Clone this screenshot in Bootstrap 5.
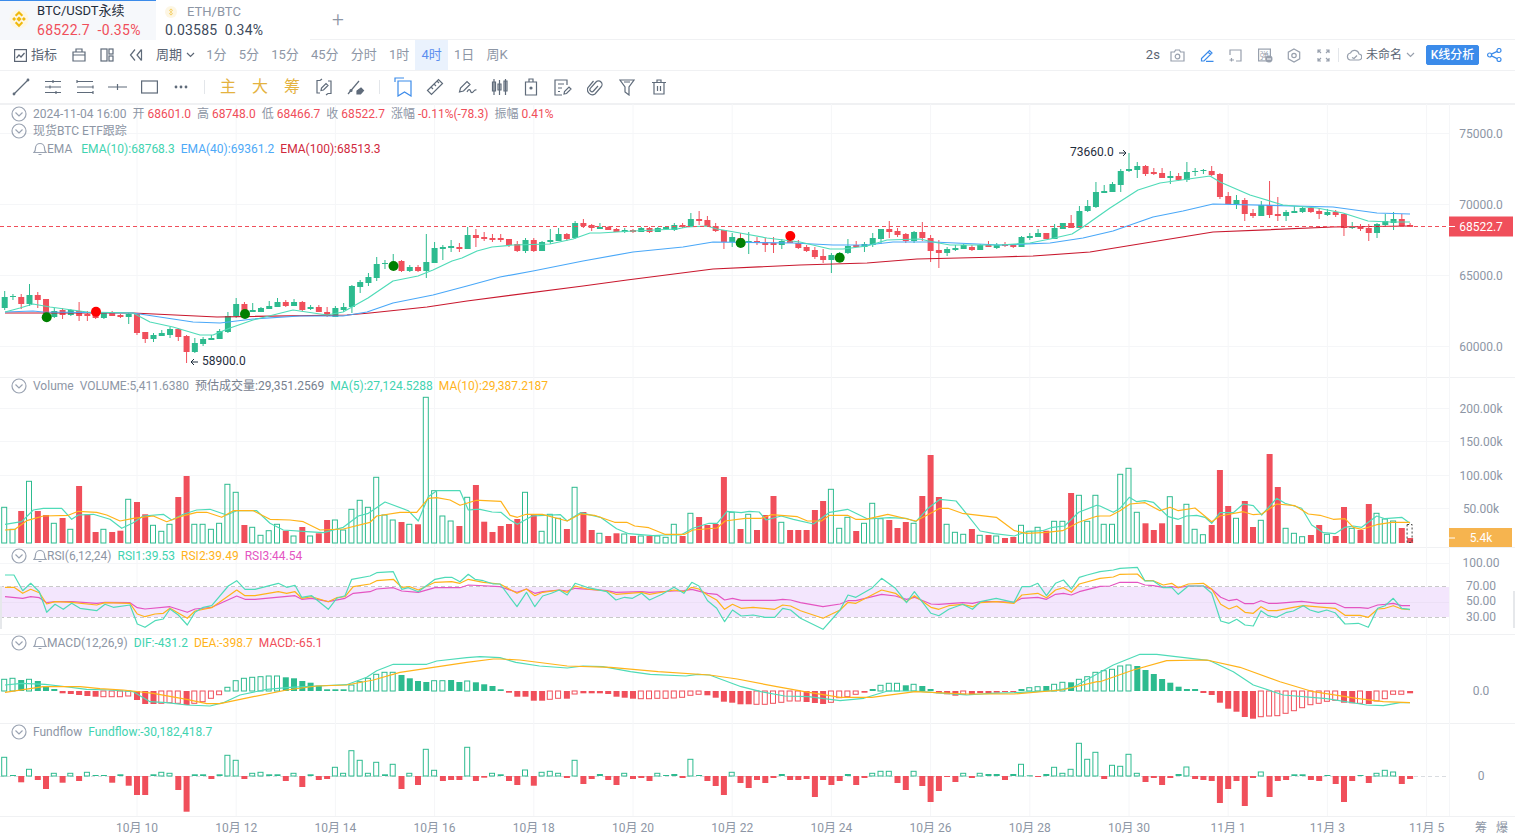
<!DOCTYPE html>
<html lang="zh">
<head>
  <meta charset="UTF-8">
  <meta name="viewport" content="width=device-width, initial-scale=1.0">
  <title>BTC/USDT永续</title>
  <link href="https://cdn.jsdelivr.net/npm/bootstrap@5.3.0/dist/css/bootstrap.min.css" rel="stylesheet">
  <style>
    html, body { height: 836px; overflow: hidden; background: #fff; }
    body { font-family: Roboto, "Noto Sans CJK SC", sans-serif; font-size: 12px; color: #8d96a5; }
    svg { display: block; }

    /* tabs */
    .tabs-bar { height: 40px; }
    .pair-tab { width: 154px; height: 40px; padding-top: 3px; }
    .pair-tab.on { background: #f6f8fb; width: 156px; box-shadow: inset 0 1px 0 #3b8bea; }
    .pair-tab .pair-name { font-size: 13px; line-height: 16px; color: #1f2d3d; height: 18px; }
    .pair-tab .pair-quote { font-size: 14px; line-height: 19px; letter-spacing: .3px; white-space: pre; }
    .pair-tab.off { padding-left: 9px; }
    .pair-dim { color: #8d96a5 !important; }
    .quote-red { color: #f04e5a; }
    .quote-dark { color: #3d4a5c; letter-spacing: .2px !important; }
    .eth-name { margin-left: 2px; }
    .tabs-rest { height: 40px; border-bottom: 1px solid #f0f1f3; }
    .add-tab { width: 56px; font-size: 21px; font-weight: 300; line-height: 38px; color: #8d96a5; text-align: center; }

    /* toolbars */
    .tool-row { height: 31px; border-bottom: 1px solid #f0f1f3; font-size: 13px; }
    .draw-row { height: 33px; border-bottom: 1px solid #f0f1f3; padding-left: 5px; }
    .tool-item { height: 30px; line-height: 30px; padding: 0 6.1px; white-space: nowrap; }
    .tool-item.on { background: #eaf2fd; color: #5b8def; }
    .tool-first { margin-left: 8px; margin-right: 1px; }
    .tool-period { padding-right: 5px; }
    .tool-secs { padding-right: 3px; }
    .tool-strong { color: #5b6574; }
    .tool-ico { width: 28.6px; height: 30px; color: #5f6b7a; }
    .tool-ico-r { width: 29.2px; height: 30px; color: #98a0ad; }
    .draw-ico { width: 32px; height: 32px; color: #5f6b7a; }
    .draw-txt { width: 32px; text-align: center; font-size: 16px; line-height: 32px; color: #e4b23f; }
    .draw-sep { width: 1px; height: 14px; background: #e3e6ea; margin: 0 7px; }
    .draw-sep.right-sep { margin-left: 0; }
    .file-name { font-size: 12px; }
    .grey-ico { color: #98a0ad; }
    .ln-ico { fill: none; stroke: currentColor; stroke-width: 1.2; }
    .blue-ico { color: #3b8bea; }
    .kline-btn { --bs-btn-padding-x: 0; --bs-btn-padding-y: 0; --bs-btn-font-size: 12px; --bs-btn-bg: #3b8bea; --bs-btn-border-color: #3b8bea; --bs-btn-border-radius: 2px; width: 53px; height: 20px; line-height: 18px; font-weight: 500; margin: 0 8px 0 11px; }
    .share-ico { margin-right: 13px; }

    /* chart panes */
    .pane-box { position: relative; }
    .pane-main { height: 273px; }
    .pane-vol { height: 170px; }
    .pane-rsi { height: 87px; }
    .pane-macd { height: 89px; }
    .pane-fund { height: 93px; }
    .pane-legend { position: absolute; left: 11px; top: 0; line-height: 18px; white-space: nowrap; }
    .pane-main .pane-legend { top: 1px; }
    .pane-legend .leg-row { height: 17.6px; }
    .leg-indent { padding-left: 22px; }
    .leg-chev { width: 16px; height: 16px; margin-right: 6px; color: #9aa3b2; flex: none; }
    .leg-bell { width: 14px; height: 14px; color: #9aa3b2; flex: none; }
    .leg-gap { margin-left: 6px; }
    .leg-gap-wide { margin-left: 9px; }
    .c-red { color: #f04e5a; }
    .c-teal { color: #3fd3b0; }
    .c-blue { color: #4da9f7; }
    .c-crim { color: #d0283c; }
    .c-amber { color: #ffb31a; }
    .c-pink { color: #e455c2; }
    .c-grey2 { color: #78818f; }
    .axis-txt { font-family: Roboto, "Noto Sans CJK SC", sans-serif; font-size: 12px; fill: #8d96a5; }
    .mark-txt { font-family: Roboto, sans-serif; font-size: 12px; fill: #1f2d3d; }
    .tag-txt { font-family: Roboto, sans-serif; font-size: 12px; fill: #fff; }
  </style>
</head>
<body>
  <!-- TABS -->
  <div class="d-flex tabs-bar">
    <div class="pair-tab on d-flex ps-2">
      <svg width="21" height="36" viewBox="-2 0 21 36" class="me-2"><circle cx="9" cy="16" r="9.500" fill="#fdf6e3"/><g fill="#f0b90b" transform="translate(9 16) scale(1.25) translate(-9 -16)"><path d="M9 13.900l2.100 2.100L9 18.100 6.900 16z"/><path d="M9 9.500l3.300 3.300-1.200 1.200L9 11.900 6.900 14l-1.200-1.200z"/><path d="M9 22.500l3.300-3.300-1.200-1.200L9 20.100 6.900 18l-1.200 1.200z"/><path d="M3.500 16l1.600-1.600L6.700 16l-1.600 1.600zM11.300 16l1.600-1.600 1.600 1.600-1.600 1.600z"/></g></svg>
      <div>
        <div class="pair-name">BTC/USDT永续</div>
        <div class="pair-quote quote-red">68522.7  -0.35%</div>
      </div>
    </div>
    <div class="pair-tab off d-flex flex-column">
      <div class="pair-name pair-dim d-flex align-items-center">
        <svg width="12" height="12" viewBox="0 0 12 12" class="me-2"><circle cx="6" cy="6" r="6" fill="#fdf6e3"/><g fill="#f3cb5c"><path d="M6 4.800L7.200 6 6 7.200 4.800 6z"/><path d="M6 2.400l2 2-.7.700L6 3.800 4.700 5.100 4 4.400zM6 9.600l2-2-.7-.700L6 8.200 4.700 6.900 4 7.600z"/></g></svg>
        <span class="eth-name">ETH/BTC</span>
      </div>
      <div class="pair-quote quote-dark">0.03585  0.34%</div>
    </div>
    <div class="tabs-rest flex-grow-1 d-flex"><div class="add-tab">+</div></div>
  </div>

  <!-- PERIOD TOOLBAR -->
  <div class="tool-row d-flex align-items-center">
    <div class="tool-item tool-strong tool-first d-flex align-items-center">
      <svg width="13" height="13" viewBox="0 0 13 13" class="ln-ico me-1"><rect x=".6" y=".6" width="11.800" height="11.800"/><path d="M2.500 9l2.500-3 2 2 3.500-4"/></svg>指标
    </div>
    <div class="tool-ico d-flex align-items-center justify-content-center"><svg width="14" height="14" viewBox="0 0 14 14" class="ln-ico"><path d="M1 4h12v9H1zM4 4V1h6v3M1 7h12"/></svg></div>
    <div class="tool-ico d-flex align-items-center justify-content-center"><svg width="14" height="14" viewBox="0 0 14 14" class="ln-ico"><rect x="1" y="1" width="6" height="12"/><rect x="9" y="1" width="4" height="5"/><rect x="9" y="8" width="4" height="5"/></svg></div>
    <div class="tool-ico d-flex align-items-center justify-content-center"><svg width="14" height="14" viewBox="0 0 14 14" class="ln-ico"><path d="M6 1.500L1.500 7 6 12.500M12.500 1.500L8 7l4.500 5.500M12.500 1.500v11"/></svg></div>
    <div class="tool-item tool-strong tool-period d-flex align-items-center">周期<svg width="9" height="6" viewBox="0 0 9 6" class="ln-ico ms-1"><path d="M1 1l3.500 3.500L8 1"/></svg></div>
    <div class="tool-item">1分</div>
    <div class="tool-item">5分</div>
    <div class="tool-item">15分</div>
    <div class="tool-item">45分</div>
    <div class="tool-item">分时</div>
    <div class="tool-item">1时</div>
    <div class="tool-item on">4时</div>
    <div class="tool-item">1日</div>
    <div class="tool-item">周K</div>

    <div class="ms-auto d-flex align-items-center">
      <div class="tool-item tool-strong tool-secs">2s</div>
      <div class="tool-ico-r d-flex align-items-center justify-content-center"><svg width="15" height="13" viewBox="0 0 15 13" class="ln-ico"><path d="M1 3h3.500l1-2h4l1 2H14v9H1z"/><circle cx="7.500" cy="7.500" r="2.300"/></svg></div>
      <div class="tool-ico-r blue-ico d-flex align-items-center justify-content-center"><svg width="14" height="14" viewBox="0 0 14 14" class="ln-ico"><path d="M1.500 10.500L9.500 2.500l2.500 2.500-8 8H1.500zM8 4l2.500 2.500M6 13.300h7.500"/></svg></div>
      <div class="tool-ico-r d-flex align-items-center justify-content-center"><svg width="13" height="13" viewBox="0 0 13 13" class="ln-ico"><path d="M1 6V1h11v11H7M2.500 9v3.500M.5 11H5"/></svg></div>
      <div class="tool-ico-r d-flex align-items-center justify-content-center"><svg width="15" height="15" viewBox="0 0 15 15"><rect x=".6" y="1.100" width="11.800" height="11.800" fill="none" stroke="currentColor" stroke-width="1.200"/><text x="1.800" y="10.500" font-size="9" fill="currentColor" font-family="Noto Sans CJK SC">弹</text><circle cx="11" cy="11" r="3.500" fill="currentColor"/><path d="M9 11h4" stroke="#fff"/></svg></div>
      <div class="tool-ico-r d-flex align-items-center justify-content-center"><svg width="14" height="15" viewBox="0 0 14 15" class="ln-ico"><path d="M7 1l5.700 3.200v6.600L7 14 1.300 10.800V4.200z"/><circle cx="7" cy="7.500" r="2.200"/></svg></div>
      <div class="tool-ico-r d-flex align-items-center justify-content-center"><svg width="13" height="13" viewBox="0 0 13 13" class="ln-ico"><path d="M1 4V1h3M9 1h3v3M12 9v3H9M4 12H1V9M1 1l3 3M12 1L9 4M12 12L9 9M1 12l3-3"/></svg></div>
      <div class="draw-sep right-sep"></div>
      <svg width="16" height="12" viewBox="0 0 16 12" class="ln-ico grey-ico"><path d="M4 11h8.500a3 3 0 0 0 .5-6A4.500 4.500 0 0 0 4.500 4 3.600 3.600 0 0 0 4 11zM6 8.500l2 1 3-3"/></svg>
      <span class="tool-strong file-name ms-1">未命名</span>
      <svg width="9" height="6" viewBox="0 0 9 6" class="ln-ico grey-ico ms-1"><path d="M1 1l3.500 3.500L8 1"/></svg>
      <button type="button" class="btn btn-primary btn-sm kline-btn">K线分析</button>
      <svg width="15" height="14" viewBox="0 0 15 14" class="ln-ico blue-ico share-ico"><circle cx="2.600" cy="7" r="2"/><circle cx="12" cy="2.500" r="2"/><circle cx="12" cy="11.500" r="2"/><path d="M4.400 6.100l5.800-2.700M4.400 7.900l5.800 2.700"/></svg>
    </div>
  </div>

  <!-- DRAWING TOOLBAR -->
  <div class="draw-row d-flex align-items-center">
    <div class="draw-ico d-flex align-items-center justify-content-center"><svg width="18" height="18" viewBox="0 0 18 18" class="ln-ico"><path d="M2 16L16 2"/><circle cx="2" cy="16" r=".8"/><circle cx="16" cy="2" r=".8"/></svg></div>
    <div class="draw-ico d-flex align-items-center justify-content-center"><svg width="18" height="16" viewBox="0 0 18 16" class="ln-ico"><path d="M1 2.500h16M1 8h16M1 13.500h16M9 1v3M6 6.500v3M12 12v3"/></svg></div>
    <div class="draw-ico d-flex align-items-center justify-content-center"><svg width="18" height="16" viewBox="0 0 18 16" class="ln-ico"><path d="M1 2.500h16M1 8h16M1 13.500h16M1 1v3M17 6.500v3M17 12v3"/></svg></div>
    <div class="draw-ico d-flex align-items-center justify-content-center"><svg width="19" height="10" viewBox="0 0 19 10" class="ln-ico"><path d="M0 5h19M9.500 2v6"/></svg></div>
    <div class="draw-ico d-flex align-items-center justify-content-center"><svg width="17" height="14" viewBox="0 0 17 14" class="ln-ico"><rect x=".6" y="1" width="15.800" height="12"/></svg></div>
    <div class="draw-ico d-flex align-items-center justify-content-center"><svg width="14" height="4" viewBox="0 0 14 4" fill="currentColor"><circle cx="2" cy="2" r="1.400"/><circle cx="7" cy="2" r="1.400"/><circle cx="12" cy="2" r="1.400"/></svg></div>
    <div class="draw-sep"></div>
    <div class="draw-txt">主</div>
    <div class="draw-txt">大</div>
    <div class="draw-txt">筹</div>
    <div class="draw-ico d-flex align-items-center justify-content-center"><svg width="18" height="18" viewBox="0 0 18 18" class="ln-ico"><path d="M5 2.500H2v12.500h3M13 3h3v12.500h-3M5 2.500l2-1.500M13 15.500l-2 1.500"/><path d="M6 12.500l.5-2.500 4.500-4.500 2 2-4.500 4.500z"/></svg></div>
    <div class="draw-ico d-flex align-items-center justify-content-center"><svg width="18" height="18" viewBox="0 0 18 18" class="ln-ico"><path d="M1 16L12 3"/><circle cx="4" cy="12.500" r="1"/><path d="M10 13l4-3 2.500 2.500-3 3.500H10z" fill="currentColor"/></svg></div>
    <div class="draw-sep"></div>
    <div class="draw-ico blue-ico d-flex align-items-center justify-content-center"><svg width="18" height="20" viewBox="0 0 18 20" class="ln-ico"><path d="M1 5V1h9M4 4h13v15l-6.500-4L4 19z"/></svg></div>
    <div class="draw-ico d-flex align-items-center justify-content-center"><svg width="18" height="18" viewBox="0 0 18 18" class="ln-ico"><path d="M1.500 12.500L12.500 1.500l4 4-11 11zM5 9l2 2M8 6l2 2M11 3l2 2"/></svg></div>
    <div class="draw-ico d-flex align-items-center justify-content-center"><svg width="19" height="18" viewBox="0 0 19 18" class="ln-ico"><path d="M1.500 14l1-4L9 3.500l3 3-6.500 6.500zM9 14c1.500-3 3-3 3.500-1s2 2 3 .5 1.500-2 3-1.500"/></svg></div>
    <div class="draw-ico d-flex align-items-center justify-content-center"><svg width="19" height="18" viewBox="0 0 19 18" class="ln-ico"><path d="M2.500 4h3v9h-3zM4 1v16M8 6h3v6H8zM9.500 2v15M14 3h3v10h-3zM15.500 1v16"/></svg></div>
    <div class="draw-ico d-flex align-items-center justify-content-center"><svg width="14" height="18" viewBox="0 0 14 18" class="ln-ico"><path d="M1.500 4h11v13h-11zM5 4V1h4v3"/><circle cx="7" cy="10" r="1" fill="currentColor"/></svg></div>
    <div class="draw-ico d-flex align-items-center justify-content-center"><svg width="18" height="17" viewBox="0 0 18 17" class="ln-ico"><path d="M13 6V1H1v15h7M4 5h6M4 9h4M4 12.500h2M10 15l.5-2.500L15 8l2 2-4.500 4.500z"/></svg></div>
    <div class="draw-ico d-flex align-items-center justify-content-center"><svg width="16" height="18" viewBox="0 0 16 18" class="ln-ico"><path d="M11 8l-4.500 5a2 2 0 0 1-3-2.800L9 4a3.500 3.500 0 0 1 5 5l-6 7a5 5 0 0 1-7-6.500L6.500 3"/></svg></div>
    <div class="draw-ico d-flex align-items-center justify-content-center"><svg width="16" height="17" viewBox="0 0 16 17" class="ln-ico"><path d="M1 1h14l-5 7v8L6 13V8zM5 3h6"/></svg></div>
    <div class="draw-ico d-flex align-items-center justify-content-center"><svg width="14" height="16" viewBox="0 0 14 16" class="ln-ico"><path d="M0 3.500h14M5 3.500V1h4v2.500M2 3.500V15h10V3.500M5.500 7v5M8.500 7v5"/></svg></div>
  </div>

  <!-- CHART -->
  <div class="pane-box pane-main">
    <svg id="paneMain" width="1515" height="273"></svg>
    <div class="pane-legend">
      <div class="leg-row d-flex align-items-center">
        <svg class="leg-chev ln-ico" viewBox="0 0 16 16"><circle cx="8" cy="8" r="7"/><path d="M4.500 6.500L8 10l3.500-3.500"/></svg>
        <span>2024-11-04 16:00</span>
        <span class="leg-gap">开 <span class="c-red">68601.0</span></span>
        <span class="leg-gap">高 <span class="c-red">68748.0</span></span>
        <span class="leg-gap">低 <span class="c-red">68466.7</span></span>
        <span class="leg-gap">收 <span class="c-red">68522.7</span></span>
        <span class="leg-gap">涨幅 <span class="c-red">-0.11%(-78.3)</span></span>
        <span class="leg-gap">振幅 <span class="c-red">0.41%</span></span>
      </div>
      <div class="leg-row d-flex align-items-center">
        <svg class="leg-chev ln-ico" viewBox="0 0 16 16"><circle cx="8" cy="8" r="7"/><path d="M4.500 6.500L8 10l3.500-3.500"/></svg>
        <span>现货BTC ETF跟踪</span>
      </div>
      <div class="leg-row leg-indent d-flex align-items-center">
        <svg class="leg-bell ln-ico" viewBox="0 0 14 14"><path d="M1 10.500h12c-1.200-1-1.500-2-1.500-4.500A4.500 4.500 0 0 0 2.500 6c0 2.500-.3 3.500-1.500 4.500zM5.500 12.500h3"/></svg>
        <span>EMA</span>
        <span class="c-teal leg-gap-wide">EMA(10):68768.3</span>
        <span class="c-blue leg-gap">EMA(40):69361.2</span>
        <span class="c-crim leg-gap">EMA(100):68513.3</span>
      </div>
    </div>
  </div>
  <div class="pane-box pane-vol">
    <svg id="paneVol" width="1515" height="170"></svg>
    <div class="pane-legend">
      <div class="leg-row d-flex align-items-center">
        <svg class="leg-chev ln-ico" viewBox="0 0 16 16"><circle cx="8" cy="8" r="7"/><path d="M4.500 6.500L8 10l3.500-3.500"/></svg>
        <span>Volume</span>
        <span class="leg-gap">VOLUME:5,411.6380</span>
        <span class="leg-gap c-grey2">预估成交量:29,351.2569</span>
        <span class="leg-gap c-teal">MA(5):27,124.5288</span>
        <span class="leg-gap c-amber">MA(10):29,387.2187</span>
      </div>
    </div>
  </div>
  <div class="pane-box pane-rsi">
    <svg id="paneRsi" width="1515" height="87"></svg>
    <div class="pane-legend">
      <div class="leg-row d-flex align-items-center">
        <svg class="leg-chev ln-ico" viewBox="0 0 16 16"><circle cx="8" cy="8" r="7"/><path d="M4.500 6.500L8 10l3.500-3.500"/></svg>
        <svg class="leg-bell ln-ico" viewBox="0 0 14 14"><path d="M1 10.500h12c-1.200-1-1.500-2-1.500-4.500A4.500 4.500 0 0 0 2.500 6c0 2.500-.3 3.500-1.500 4.500zM5.500 12.500h3"/></svg>
        <span>RSI(6,12,24)</span>
        <span class="leg-gap c-teal">RSI1:39.53</span>
        <span class="leg-gap c-amber">RSI2:39.49</span>
        <span class="leg-gap c-pink">RSI3:44.54</span>
      </div>
    </div>
  </div>
  <div class="pane-box pane-macd">
    <svg id="paneMacd" width="1515" height="89"></svg>
    <div class="pane-legend">
      <div class="leg-row d-flex align-items-center">
        <svg class="leg-chev ln-ico" viewBox="0 0 16 16"><circle cx="8" cy="8" r="7"/><path d="M4.500 6.500L8 10l3.500-3.500"/></svg>
        <svg class="leg-bell ln-ico" viewBox="0 0 14 14"><path d="M1 10.500h12c-1.200-1-1.500-2-1.500-4.500A4.500 4.500 0 0 0 2.500 6c0 2.500-.3 3.500-1.500 4.500zM5.500 12.500h3"/></svg>
        <span>MACD(12,26,9)</span>
        <span class="leg-gap c-teal">DIF:-431.2</span>
        <span class="leg-gap c-amber">DEA:-398.7</span>
        <span class="leg-gap c-red">MACD:-65.1</span>
      </div>
    </div>
  </div>
  <div class="pane-box pane-fund">
    <svg id="paneFund" width="1515" height="93"></svg>
    <div class="pane-legend">
      <div class="leg-row d-flex align-items-center">
        <svg class="leg-chev ln-ico" viewBox="0 0 16 16"><circle cx="8" cy="8" r="7"/><path d="M4.500 6.500L8 10l3.500-3.500"/></svg>
        <span>Fundflow</span>
        <span class="leg-gap c-teal">Fundflow:-30,182,418.7</span>
      </div>
    </div>
  </div>
  <svg id="paneTime" width="1515" height="20"></svg>

  <script src="https://cdn.jsdelivr.net/npm/bootstrap@5.3.0/dist/js/bootstrap.bundle.min.js"></script>
  <script>
    const UP = '#2dbb8f', DOWN = '#f04f5b', TEAL = '#4fdbb8', BLUE = '#4aa8f8', CRIMSON = '#c9182e', AMBER = '#ffb31a', PINK = '#e455c2';
    const GRID = '#f5f6f8', SEP = '#f0f1f3', AXIS_X = 1449;
    const barX = i => 4.7 + i * 8.267;
    const ticks = Array.from({ length: 14 }, (_, k) => 137 + k * 99.2);

    // y values below were read off at 3x, so they all come through /3 + top of the crop
    const fromCrop = (list, top) => list.map(v => Math.sign(v) * (top + Math.abs(v) / 3));

    // candles: open/close/high/low as page y
    const CANDLES = `g297,308,291,310 g296,297,294,300 r297,304,294,309 g295,304,284,306 r295,300,292,308 r299,314,299,316 g311,317,308,318 r310,315,308,319 g310,315,309,316 r311,316,302,321
r314,316,311,321 r313,318,311,319 g313,318,312,319 r313,316,311,316 r315,317,314,318 g314,317,313,324 r314,333,314,335 r332,339,332,343 g335,339,333,342 g333,336,330,336
g329,335,327,338 r329,337,328,341 r336,352,335,363 g343,352,338,353 g339,344,337,346 g338,340,335,340 g331,339,329,339 g316,332,312,333 g304,316,298,318 r304,317,302,318
g310,312,303,312 g308,312,307,312 g306,309,301,309 g302,307,298,307 r302,306,300,307 g302,306,299,306 r302,310,301,311 g307,309,305,310 r307,312,305,312 r312,316,307,317
g308,317,306,317 g307,310,303,312 g286,307,285,313 g282,287,280,293 g277,283,273,286 g264,278,257,281 g263,264,260,269 g263,268,254,270 r261,271,260,272 g267,271,265,272
r267,271,265,272 g262,271,234,278 g248,263,242,263 g247,249,245,260 g246,248,240,252 r247,249,243,252 g235,249,227,249 r235,238,229,247 r237,239,232,241 r238,240,234,242
r238,240,234,242 r239,245,239,247 r244,251,241,252 g240,251,238,253 r240,251,238,252 g242,251,241,251 g240,242,229,244 g234,241,228,241 r234,239,233,241 g223,238,221,239
r223,226,219,228 r225,228,224,231 g227,229,223,229 r227,230,226,230 r229,232,228,232 g230,232,228,233 r230,232,229,233 g228,232,227,232 r228,232,227,233 g228,232,227,232
g227,229,226,229 g225,230,223,231 r225,227,223,228 g219,227,213,227 r219,221,211,225 r220,226,216,227 r226,231,223,232 r230,242,230,249 g237,242,233,247 r238,246,233,247
g241,243,232,254 r241,243,237,245 r242,245,238,252 r243,245,237,253 g241,245,239,249 r241,243,236,243 r243,248,240,249 r247,251,245,252 r250,257,247,259 r256,260,249,263
g255,260,253,273 g253,258,252,259 g246,253,239,254 r245,247,241,247 g244,247,242,252 g238,245,233,247 g229,239,229,244 r229,232,221,238 r231,235,228,237 r234,241,233,243
g232,241,231,243 r232,238,222,241 r238,251,235,262 r250,253,240,268 g249,253,247,256 g248,250,245,251 g245,249,244,249 r247,250,245,251 g245,250,244,250 r245,247,241,247
g245,248,243,249 r244,246,242,247 r245,247,245,248 g237,247,236,247 g236,238,233,240 g233,237,229,237 r233,239,233,239 g228,239,224,239 g223,229,223,229 r223,228,215,228
g211,228,206,228 g206,211,200,212 g192,207,182,208 g191,193,185,193 g184,192,182,192 g171,185,169,192 g169,171,153,172 g166,170,162,178 r166,174,165,176 r172,174,168,175
r173,178,168,178 g176,178,171,184 r176,180,173,181 g172,180,162,182 g171,172,168,176 g170,171,169,174 r171,175,166,176 r174,197,173,199 r196,204,192,204 g200,204,195,209
r200,214,198,221 r213,216,209,218 g205,216,201,216 r205,215,181,218 r214,216,197,221 g212,216,210,221 g211,213,206,213 g208,212,207,213 r208,212,207,213 r211,214,208,219
g212,215,209,216 r212,215,210,217 r214,228,214,236 g227,228,222,229 r226,229,224,231 r228,233,224,241 g224,233,223,238 g221,225,214,226 g219,223,212,230 r219,226,214,227
r225,227,223,227`.split(/\s+/);

    const EMA10 = [5,312,20,308,33,304,50,307,87,312,133,313,150,322,173,327,200,335,213,335,230,328,253,320,293,310,327,315,343,312,368,298,393,281,418,276,433,270,452,261,462,258,477,251,492,247,513,245,550,244,573,239,590,233,600,233,633,231,677,229,687,227,707,226,717,229,740,233,767,238,800,242,830,249,843,249,867,246,887,240,920,239,933,242,950,245,1000,245,1030,243,1050,239,1072,234,1083,227,1110,208,1138,190,1160,183,1210,176,1220,182,1250,195,1283,205,1317,208,1343,213,1368,221,1390,222,1410,222];
    const EMA40 = [5,312,33,311,43,312,133,313,193,322,220,323,253,319,300,316,343,316,367,312,393,303,433,295,467,286,500,277,533,271,583,261,633,252,683,247,713,242,793,243,833,245,867,245,893,242,933,242,1000,245,1050,243,1083,238,1113,231,1153,217,1183,211,1213,204,1333,207,1377,213,1410,214];
    const EMA100 = [5,313,133,313,217,317,347,315,370,313,427,307,467,301,583,286,627,280,713,269,800,265,867,263,917,259,1000,257,1033,256,1090,252,1133,245,1213,232,1333,227,1410,226];

    // positive = up bar, negative = down bar
    const VOL = [...fromCrop([682,748,-693,604,-693,-705,730,-714,748,-618,-703,-756,748,-756,-752,658,-666,-703,736,754,733,-651,-588,733,733,748,730,613,637,-735,742,766,752,733,-752,768,-741,768,-760,-720,720,750,688,661,682,592,705,720,-726,733,-733,352,632,708,723,-738,652,-615], 280),
      ...fromCrop([-245,-276,-258,-252,-237,157,-225,274,223,235,-267,142,-216,-270,280,-288,-280,282,-288,288,-288,288,292,253,-288,220,-231,-255,-252,-111,217,-267,223,-270,-225,-168,247,-270,-270,-270,-210,-183,148,265,232,-273,250,190,236,-240,-264,-246,250,-168,-45,-171,253,277,283,-267,286,-285,288,-294,-291,256,274,262,-272,244,244,-159,166,244,166], 440),
      ...fromCrop([253,253,103,85,217,-250,-270,-250,170,-255,193,268,284,-255,-90,-198,235,-183,-261,241,-42,-141,265,280,290,-285,-255,283,-288,-201,265,-270,-192,220,237,243,-264,-294], 440)];

    // traced lines, [x, y, x, y, ...] in page px; overlapping crops get cut at the join
    const trace = (...segs) => {
      const out = [];
      segs.forEach(([pts, ox, oy, sx]) => {
        for (let k = 0; k < pts.length; k += 2) {
          const x = ox + pts[k] / sx, y = oy + pts[k + 1] / 3;
          if (!out.length || x > out[out.length - 2]) out.push(x, y);
        }
      });
      return out;
    };
    const Z10 = 1568 / 630, Z11 = 1568 / 620;

    const VOL_MA5 = trace(
      [[15,733,65,725,100,690,130,685,185,685,215,718,235,705,280,703,330,718,365,745,400,728,430,708,490,703,515,720,550,703,590,690,630,688,680,705,710,692,770,692,810,730,850,750,920,755,970,758,1030,742,1075,708,1105,700,1155,666,1225,692,1255,723,1285,650,1310,632,1380,632,1405,690,1430,688], 0, 280, 3],
      [[0,208,30,216,52,217,75,240,93,253,130,228,160,226,200,224,217,243,250,218,300,232,340,266,370,281,430,287,460,285,500,285,530,265,570,250,590,250,615,214,650,218,670,214,695,216,712,240,750,228,780,238,830,252,870,217,915,208,965,237,1020,233,1060,235,1085,245,1115,205,1145,178,1185,183,1210,220,1245,273,1280,281,1330,288,1360,275,1400,272,1425,262,1455,258,1490,217,1535,196], 480, 440, Z10],
      [[0,198,40,217,60,205,88,172,110,185,135,182,160,187,205,230,235,238,260,228,290,226,315,232,335,250,360,218,400,218,430,192,460,197,485,225,530,175,555,190,605,205,635,255,670,278,705,281,735,262,760,258,785,262,830,228,855,236,905,232,930,250], 1100, 440, 3]);
    const VOL_MA10 = trace(
      [[15,750,45,748,80,722,130,708,205,706,235,694,290,697,320,705,360,723,400,715,460,708,500,725,540,710,590,697,620,697,665,712,700,692,760,692,810,718,870,720,910,725,960,750,1030,747,1110,727,1130,708,1200,697,1250,697,1285,655,1310,653,1350,660,1380,676,1430,661], 0, 280, 3],
      [[0,181,52,184,75,226,93,232,115,223,155,223,217,243,250,222,285,226,335,247,365,247,385,258,420,263,460,283,510,283,530,270,590,264,610,243,660,235,700,235,725,224,790,230,815,243,850,243,870,226,915,226,935,238,960,238,1015,223,1085,243,1145,205,1165,205,1200,220,1285,232,1330,272,1360,280,1410,277,1450,272,1490,247,1535,229], 480, 440, Z10],
      [[0,228,30,228,60,212,90,192,135,188,180,212,210,202,235,212,285,204,335,245,360,228,430,215,460,224,485,222,530,192,585,197,625,222,660,226,700,238,735,236,760,262,785,268,830,254,875,247,930,247], 1100, 440, 3]);

    const RSI1 = trace(
      [[15,75,42,75,68,122,92,100,118,125,140,187,165,163,190,178,215,160,240,175,290,182,315,163,340,172,390,165,412,222,435,232,465,212,490,207,510,177,535,195,562,225,585,187,610,172,635,167,685,108,710,92,735,118,765,118,835,100,860,112,885,106,905,142,935,137,985,178,1010,145,1035,137,1055,88,1110,78,1130,68,1180,65,1205,118,1225,113,1255,125,1305,88,1335,82,1355,82,1380,95,1405,73,1425,88,1450,92,1480,102], 0, 550, 3],
      [[0,72,43,140,67,97,88,140,108,108,130,100,150,90,170,105,190,70,220,82,270,95,293,120,315,112,335,115,358,100,378,120,410,103,440,82,465,100,485,67,503,78,525,122,548,145,568,185,588,150,610,168,640,165,670,172,695,172,715,145,735,150,760,175,817,208,860,150,880,105,900,112,940,85,965,55,1000,85,1028,128,1048,95,1090,160,1110,167,1135,148,1170,133,1195,148,1215,125,1255,115,1300,127,1320,80,1340,80,1360,70,1382,107,1405,70,1425,60,1445,87,1465,52,1485,45], 500, 560, Z11],
      [[0,395,40,390,60,385,112,382,135,423,160,423,190,443,215,442,235,463,265,438,310,438,335,460,362,543,387,550,410,538,435,555,460,558,483,512,505,527,530,532,560,517,580,513,610,497,630,510,655,517,680,510,705,518,735,552,775,550,805,562,833,505,855,497,880,475,905,505,930,508], 1100, 440, 3]);
    const RSI2 = trace(
      [[15,112,42,112,68,130,92,118,118,128,140,162,165,155,215,157,290,165,315,158,390,160,412,192,435,200,465,192,490,190,510,175,562,205,585,183,635,173,710,120,735,137,765,137,835,125,860,130,885,125,905,145,935,140,985,155,1010,143,1035,140,1060,110,1110,102,1130,92,1180,88,1205,112,1230,110,1255,120,1305,97,1355,95,1380,100,1405,88,1450,97], 0, 550, 3],
      [[0,72,43,100,67,87,88,107,108,97,150,90,170,97,190,78,220,87,270,93,293,103,358,97,378,103,440,90,465,95,485,82,503,87,525,105,548,120,568,148,588,133,610,145,640,142,695,148,715,135,735,138,760,152,817,175,860,150,880,127,900,130,965,90,1000,100,1028,125,1048,107,1090,142,1110,148,1135,137,1170,133,1195,140,1215,128,1255,125,1300,130,1320,105,1360,100,1382,113,1405,90,1425,83,1445,97,1465,72], 500, 560, Z11],
      [[0,415,40,411,60,403,112,402,135,422,160,422,190,435,215,430,235,443,265,432,310,430,335,447,362,493,387,507,410,498,435,517,460,520,483,500,505,512,530,512,580,502,610,497,680,503,705,505,735,526,780,526,805,532,833,507,855,505,880,497,905,507,930,509], 1100, 440, 3]);
    const RSI3 = trace(
      [[15,140,68,145,92,140,118,143,140,158,165,155,215,155,290,160,315,157,390,158,412,173,435,177,510,170,562,187,585,177,635,172,710,138,735,148,765,148,885,137,905,148,935,145,985,155,1035,145,1060,130,1110,125,1130,117,1180,113,1205,123,1255,127,1305,113,1380,113,1405,105], 0, 550, 3],
      [[0,80,43,97,67,87,88,100,108,95,150,90,170,93,190,85,270,92,293,97,358,95,378,97,440,93,465,92,485,88,525,100,548,103,568,120,588,115,610,121,695,121,715,118,735,120,760,128,817,140,860,132,880,122,900,122,965,103,1000,108,1028,118,1048,112,1090,132,1110,133,1170,128,1195,130,1215,125,1255,125,1300,127,1320,115,1360,112,1382,118,1405,103,1425,100,1445,105,1465,95], 500, 560, Z11],
      [[0,439,30,438,60,427,112,427,135,435,160,437,190,442,215,440,235,443,265,438,310,438,335,448,362,472,387,482,410,478,435,491,460,491,483,482,505,490,530,490,605,484,655,490,705,490,735,503,780,503,805,505,833,495,855,493,880,490,905,497,930,497], 1100, 440, 3]);

    const DIF = trace(
      [[15,405,65,400,135,403,180,408,260,418,330,420,400,425,450,455,500,458,560,465,630,468,670,458,720,435,800,418,870,412,950,408,1040,404,1100,382,1130,362,1180,343,1280,343,1310,333,1400,323,1440,320], 0, 550, 3],
      [[0,293,40,307,100,318,170,324,210,318,260,320,330,335,380,343,470,348,500,343,530,345,610,380,660,395,720,408,780,410,860,422,920,415,980,393,1050,393,1100,398,1180,405,1240,400,1300,398,1400,392,1450,382,1520,335], 500, 560, Z11],
      [[0,122,40,105,120,73,170,73,330,92,400,125,460,165,550,195,680,206,800,225,850,227,900,218,930,218], 1100, 630, 3]);
    const DEA = trace(
      [[15,427,130,410,240,410,300,416,370,420,460,430,560,448,620,461,660,461,760,440,860,420,950,408,1040,405,1120,390,1200,367,1300,352,1400,337,1480,327], 0, 550, 3],
      [[0,297,50,300,170,318,280,322,400,335,530,345,600,357,700,380,770,395,860,412,940,412,1050,395,1180,402,1300,402,1420,390,1510,365], 500, 560, Z11],
      [[0,155,100,120,200,92,320,90,420,112,540,155,640,185,770,205,850,215,930,218], 1100, 630, 3]);

    // macd bar end; negative = hollow bar
    const MACD = [...fromCrop([-388,-385,390,-388,393,408,417,430,432,435,438,440,-440,-440,-440,-438,450,462,462,-460,-458,-460,465,-460,-455,-445,-434,-412,-392,-385,-382,-380,-378,-378,382,385,393,398,407,418,418,418,-405,-395,-385,-373,-367,-367,375,385,393,396,-392,-392,390,396,-393,397,403,408], 550),
      ...fromCrop([388,398,410,410,422,422,-418,-415,416,-402,-400,400,400,402,410,413,416,-416,-416,-415,-415,-414,-412,-406,-403,406,413,425,428,433,433,-433,-433,-430,-427,-423,-423,426,429,432,-427,-413,-410,-403,398,387,-376,-370,-370,376,-373,378,387,400,403,407,-403,405,-399,-399,398,395,395,387,-383,-380,378,-373,-367,367,-358,-350,-337], 560),
      ...fromCrop([-122,-118,-108,-105,108,120,132,147,158,170,177,177,189,195,218,236,245,261,266,-260,-258,-257,-250,-242,-233,-224,-220,-214,-211,218,220,-220,222,-213,-206,-193,-193,-190], 630)];

    const FUND = [...fromCrop([622,675,697,658,690,717,670,698,670,693,667,675,675,698,673,707,735,735,673,667,670,720,785,673,673,687,673,616,631,687,670,667,673,673,693,670,711,673,690,687,652,670,602,631,670,637,673,643,717,670,705,598,661,693,690,690,592,693,683,670,673], 550),
      ...fromCrop([153,165,120,167,127,124,130,144,91,162,147,132,150,165,130,147,144,153,130,135,132,144,88,135,153,168,195,127,159,174,150,159,144,132,150,150,147,201,150,165,153,132,165,144,130,124,124,159,180,124,168,216,183,141,156,130,144,130,132,132,150,132,103,136,141,132,112,130,118,40,88,67], 730),
      ...fromCrop([447,406,409,373,430,456,444,465,444,432,411,447,450,453,519,477,453,528,444,426,501,453,450,433,433,450,453,435,462,516,453,435,459,430,421,426,462,447], 630)];

    const linePath = (pts, color, w = 1.2) => {
      let d = '';
      for (let k = 0; k < pts.length; k += 2) d += (k ? 'L' : 'M') + pts[k].toFixed(1) + ' ' + pts[k + 1].toFixed(1);
      return `<path d="${d}" fill="none" stroke="${color}" stroke-width="${w}" stroke-linejoin="round"/>`;
    };
    const hline = (y, color = GRID, x2 = AXIS_X) => `<line x1="0" x2="${x2}" y1="${y}" y2="${y}" stroke="${color}"/>`;
    const label = (y, text) => `<text class="axis-txt" x="1481" y="${y + 4}" text-anchor="middle">${text}</text>`;

    function gridFor(top, h, rows) {
      let s = `<rect x="0" y="${top}" width="1515" height="${h}" fill="#fff"/>` + hline(top + .5, SEP, 1515);
      ticks.forEach(x => { s += `<line x1="${x}" x2="${x}" y1="${top}" y2="${top + h}" stroke="${GRID}"/>`; });
      s += `<line x1="${AXIS_X + .5}" x2="${AXIS_X + .5}" y1="${top}" y2="${top + h}" stroke="${GRID}"/>`;
      rows.forEach(y => { s += hline(y + .5); });
      return s;
    }
    const mount = (id, top, h, body) => {
      const el = document.getElementById(id);
      el.setAttribute('viewBox', `0 ${top} 1515 ${h}`);
      el.innerHTML = body;
    };
    const bar = (i, y0, y1, color, hollow, w = 6) => {
      const t = Math.min(y0, y1), hh = Math.max(Math.abs(y1 - y0), 1), x = barX(i) - w / 2;
      if (hollow && hh > 2.5) return `<rect x="${x.toFixed(1)}" y="${t.toFixed(1)}" width="${w - 1}" height="${hh.toFixed(1)}" fill="#fff" fill-opacity="0" stroke="${color}"/>`;
      return `<rect x="${x.toFixed(1)}" y="${t.toFixed(1)}" width="${w}" height="${hh.toFixed(1)}" fill="${color}"/>`;
    };

    // main pane
    {
      let s = gridFor(104, 273, [133, 204, 275, 346]);
      CANDLES.forEach((c, i) => {
        const col = c[0] === 'g' ? UP : DOWN;
        const [t, b, h, l] = c.slice(1).split(',').map(Number);
        const x = barX(i);
        s += `<line x1="${x}" x2="${x}" y1="${h}" y2="${l}" stroke="${col}"/>`;
        s += `<rect x="${x - 3}" y="${t}" width="6" height="${b - t}" fill="${col}"/>`;
      });
      s += linePath(EMA100, CRIMSON) + linePath(EMA40, BLUE) + linePath(EMA10, TEAL);
      [[46.7, 317.3, '#008000'], [96, 311.7, '#ff0000'], [245, 314, '#008000'], [393.5, 266, '#008000'], [740.7, 243, '#008000'], [790.3, 236, '#ff0000'], [839.7, 257.7, '#008000']]
        .forEach(([x, y, c]) => { s += `<circle cx="${x}" cy="${y}" r="5" fill="${c}"/>`; });
      s += `<line x1="0" x2="${AXIS_X}" y1="226.5" y2="226.5" stroke="#f04f5b" stroke-dasharray="4 3"/>`;
      s += `<text class="mark-txt" x="1070" y="156">73660.0</text><path d="M1119 153h7M1123 150l3 3-3 3" fill="none" stroke="#1f2d3d"/>`;
      s += `<text class="mark-txt" x="202" y="365">58900.0</text><path d="M198 362h-7M194 359l-3 3 3 3" fill="none" stroke="#1f2d3d"/>`;
      s += label(133.5, '75000.0') + label(204.5, '70000.0') + label(275.5, '65000.0') + label(346.5, '60000.0');
      s += `<rect x="${AXIS_X}" y="216.500" width="64" height="20" fill="#f04f5b"/><line x1="${AXIS_X}" x2="${AXIS_X + 6}" y1="226.500" y2="226.500" stroke="#fff"/>`;
      s += `<text class="tag-txt" x="1481" y="230.500" text-anchor="middle">68522.7</text>`;
      mount('paneMain', 104, 273, s);
    }

    // volume pane
    {
      const base = 543;
      let s = gridFor(377, 170, [408, 441, 475, 508]);
      VOL.forEach((v, i) => { s += bar(i, Math.abs(v), base, v > 0 ? UP : DOWN, v > 0); });
      s += `<rect x="${barX(170) - 3}" y="524.500" width="5" height="18" fill="none" stroke="#444" stroke-dasharray="2 2"/>`;
      s += linePath(VOL_MA5, TEAL) + linePath(VOL_MA10, AMBER);
      s += label(408.5, '200.00k') + label(441.500, '150.00k') + label(475.500, '100.00k') + label(508.500, '50.00k');
      s += `<rect x="${AXIS_X}" y="528" width="63" height="19" fill="#f6b44f"/><line x1="${AXIS_X}" x2="${AXIS_X + 6}" y1="538" y2="538" stroke="#fff"/>`;
      s += `<text class="tag-txt" x="1481" y="542" text-anchor="middle">5.4k</text>`;
      mount('paneVol', 377, 170, s);
    }

    // rsi pane
    {
      let s = gridFor(547, 87, [563, 602]);
      s += `<rect x="0" y="587" width="${AXIS_X}" height="30" fill="#f3e6fd"/>`;
      s += `<line x1="0" x2="${AXIS_X}" y1="586.500" y2="586.500" stroke="#c9c9c9" stroke-dasharray="4 3"/><line x1="0" x2="${AXIS_X}" y1="617.500" y2="617.500" stroke="#c9c9c9" stroke-dasharray="4 3"/>`;
      s += hline(602.5, '#ece0f6');
      s += linePath(RSI3, PINK) + linePath(RSI2, AMBER) + linePath(RSI1, TEAL);
      s += `<rect x="0" y="586" width="2" height="43" fill="#e6e8eb"/><rect x="1513" y="591" width="2" height="37" fill="#e6e8eb"/>`;
      s += label(562.500, '100.00') + label(585.500, '70.00') + label(600.500, '50.00') + label(616.500, '30.00');
      mount('paneRsi', 547, 87, s);
    }

    // macd pane
    {
      const base = 691;
      let s = gridFor(634, 89, []);
      MACD.forEach((v, i) => { const y = Math.abs(v); s += bar(i, y, base, y < base ? UP : DOWN, v < 0); });
      s += linePath(DIF, TEAL) + linePath(DEA, AMBER);
      s += label(690.5, '0.0');
      mount('paneMacd', 634, 89, s);
    }

    // fundflow pane
    {
      const base = 776;
      let s = gridFor(723, 93, []);
      s += `<line x1="0" x2="${AXIS_X}" y1="776.500" y2="776.500" stroke="#d9dce0" stroke-dasharray="4 3"/>`;
      FUND.forEach((y, i) => { s += bar(i, y, base, y < base ? UP : DOWN, y < base); });
      s += label(775.500, '0');
      mount('paneFund', 723, 93, s);
    }

    // time axis
    {
      const names = ['10月 10', '10月 12', '10月 14', '10月 16', '10月 18', '10月 20', '10月 22', '10月 24', '10月 26', '10月 28', '10月 30', '11月 1', '11月 3', '11月 5'];
      let s = hline(816.5, SEP, 1515);
      ticks.forEach((x, k) => { s += `<text class="axis-txt" x="${x}" y="832" text-anchor="middle">${names[k]}</text>`; });
      s += `<text class="axis-txt" x="1481" y="832" text-anchor="middle">筹</text><text class="axis-txt" x="1502" y="832" text-anchor="middle">爆</text>`;
      mount('paneTime', 816, 20, s);
    }
  </script>
</body>
</html>
